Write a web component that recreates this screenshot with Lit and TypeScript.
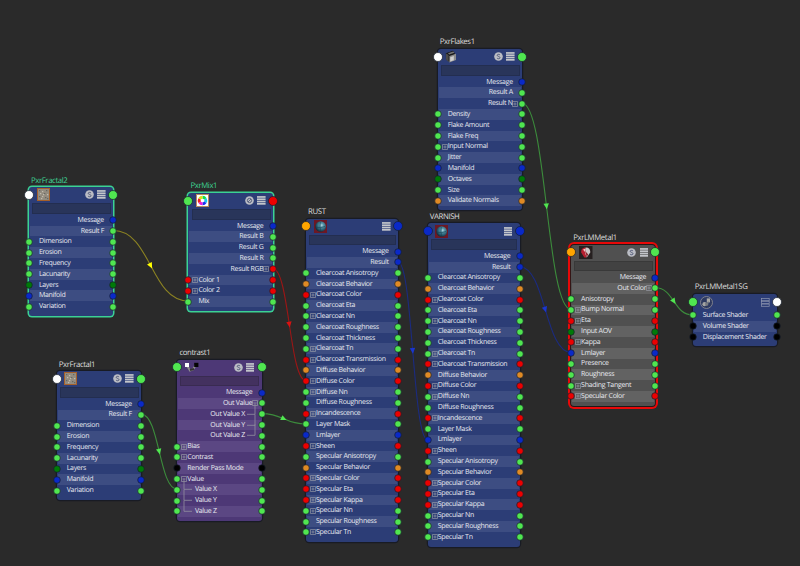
import { LitElement, html, css, svg, nothing } from "lit";
import { customElement, property } from "lit/decorators.js";
import { classMap } from "lit/directives/class-map.js";
import { styleMap } from "lit/directives/style-map.js";

interface Row {
  label: string;
  color: string;
  side: "in" | "out";
  box?: "plus" | "minus";
  sub?: "mid" | "last";
}

interface NodeData {
  title: string;
  x: number;
  y: number;
  w: number;
  h: number;
  theme: "blue" | "purple" | "grey";
  mark?: "green" | "red";
  icon: string;
  solo?: "S" | "O";
  inPort: string;
  outPort: string;
  compact?: boolean;
  rows: Row[];
}

const PORT: Record<string, string> = {
  g: "#50e650",
  d: "#007a08",
  b: "#0a29c8",
  r: "#ec0000",
  o: "#e08a24",
  k: "#000000",
  w: "#ffffff",
  y: "#ffa500",
};

/* Row notation: ">" output, "<" input; then the port colour; "+" or "-" expander; "." or "_" child. */
const parse = (src: string): Row[] =>
  src.split("|").map((s) => {
    const f = s[2];
    return {
      side: s[0] === ">" ? "out" : "in",
      color: PORT[s[1]],
      box: f === "+" ? "plus" : f === "-" ? "minus" : undefined,
      sub: f === "." ? "mid" : f === "_" ? "last" : undefined,
      label: s.slice(3),
    };
  });

const fractalRows = parse(
  ">b Message|>g Result F|<g Dimension|<g Erosion|<g Frequency|<g Lacunarity|<d Layers|<b Manifold|<g Variation"
);
const layerRows = parse(
  ">b Message|>b Result|<g Clearcoat Anisotropy|<o Clearcoat Behavior|<r+Clearcoat Color|<g Clearcoat Eta|<g+Clearcoat Nn|<g Clearcoat Roughness|<g Clearcoat Thickness|<g+Clearcoat Tn|<r+Clearcoat Transmission|<o Diffuse Behavior|<r+Diffuse Color|<g+Diffuse Nn|<g Diffuse Roughness|<r+Incandescence|<g Layer Mask|<b Lmlayer|<r+Sheen|<g Specular Anisotropy|<o Specular Behavior|<r+Specular Color|<r+Specular Eta|<r+Specular Kappa|<g+Specular Nn|<g Specular Roughness|<g+Specular Tn"
);

const nodes: NodeData[] = [
  { title: "PxrFlakes1", x: 437.6, y: 49, w: 84.4, h: 160.7, theme: "blue", icon: "flakes", solo: "S", inPort: "w", outPort: "g",
    rows: parse(">b Message|>g Result A|>g+Result N|<g Density|<g Flake Amount|<g Flake Freq|<g+Input Normal|<g Jitter|<b Manifold|<d Octaves|<g Size|<o Validate Normals") },
  { title: "PxrFractal2", x: 28.8, y: 187.2, w: 84.4, h: 129.2, theme: "blue", mark: "green", icon: "fractal", solo: "S", inPort: "w", outPort: "g", rows: fractalRows },
  { title: "PxrFractal1", x: 56.6, y: 371.1, w: 84.4, h: 129.2, theme: "blue", icon: "fractal", solo: "S", inPort: "w", outPort: "g", rows: fractalRows },
  { title: "PxrMix1", x: 188.3, y: 193, w: 84.4, h: 118, theme: "blue", mark: "green", icon: "mix", solo: "O", inPort: "g", outPort: "r",
    rows: parse(">b Message|>g Result B|>g Result G|>g Result R|>r+Result RGB|<r+Color 1|<r+Color 2|<g Mix") },
  { title: "contrast1", x: 177.2, y: 359.6, w: 84.4, h: 161, theme: "purple", icon: "contrast", solo: "S", inPort: "g", outPort: "g",
    rows: parse(">b Message|>g-Out Value|>g.Out Value X|>g.Out Value Y|>g_Out Value Z|<g+Bias|<g+Contrast|<k Render Pass Mode|<g-Value|<g.Value X|<g.Value Y|<g_Value Z") },
  { title: "RUST", x: 305.9, y: 218.6, w: 92, h: 323.5, theme: "blue", icon: "sphere", inPort: "y", outPort: "b", rows: layerRows },
  { title: "VARNISH", x: 427.6, y: 223.3, w: 92, h: 323.5, theme: "blue", icon: "sphere", inPort: "b", outPort: "b", rows: layerRows },
  { title: "PxrLMMetal1", x: 571, y: 244.5, w: 84.4, h: 161, theme: "grey", mark: "red", icon: "metal", solo: "S", inPort: "y", outPort: "g",
    rows: parse(">b Message|>g+Out Color|<g Anisotropy|<g+Bump Normal|<r+Eta|<d Input AOV|<r+Kappa|<b Lmlayer|<g Presence|<g Roughness|<g+Shading Tangent|<r+Specular Color") },
  { title: "PxrLMMetal1SG", x: 692.6, y: 294, w: 84.2, h: 52.2, theme: "blue", icon: "group", inPort: "g", outPort: "w", compact: true,
    rows: parse("<g Surface Shader|<k Volume Shader|<k Displacement Shader") },
];

interface Link { from: [number, number]; to: [number, number]; line: string; tip: string }
const links: Link[] = [
  { from: [113.5, 230.5], to: [188, 301], line: "#8c8322", tip: "#ffff00" },
  { from: [141.5, 414.4], to: [177, 489], line: "#3c8c3c", tip: "#50e650" },
  { from: [272.7, 268.5], to: [306, 380.5], line: "#9c1616", tip: "#d81212" },
  { from: [261.7, 413.6], to: [306, 424], line: "#3c8c3c", tip: "#50e650" },
  { from: [398, 262], to: [427.4, 439.4], line: "#1b2b80", tip: "#1a36d0" },
  { from: [519.5, 266.7], to: [571, 352.4], line: "#1b2b80", tip: "#1a36d0" },
  { from: [522, 103.2], to: [571, 309.4], line: "#3c8c3c", tip: "#50e650" },
  { from: [655.5, 287.8], to: [692.4, 315], line: "#3c8c3c", tip: "#50e650" },
];

const grain = [
  [2, 2], [5, 3], [9, 2], [3, 5], [7, 5], [10, 6], [2, 8], [5, 8], [8, 9], [4, 10], [10, 10], [6, 6],
];

const icons: Record<string, unknown> = {
  fractal: svg`<rect x=".5" y=".5" width="12" height="12" fill="#938c80" stroke="#a5602a"/>
    ${grain.map(([x, y], i) => svg`<rect x=${x} y=${y} width="1.3" height="1.2" fill=${i % 2 ? "#c1bcae" : "#666863"}/>`)}`,
  mix: svg`<rect x=".5" y=".5" width="12" height="12" fill="#fff" stroke="#b98a5e"/>
    <g fill="none" stroke-width="2.9">
      <path d="M6.5 3.2A3.3 3.3 0 0 1 9.4 4.9" stroke="#14e04a"/><path d="M9.4 4.9A3.3 3.3 0 0 1 9.3 8.2" stroke="#18c8f0"/>
      <path d="M9.3 8.2A3.3 3.3 0 0 1 6.5 9.8" stroke="#1830f0"/><path d="M6.5 9.8A3.3 3.3 0 0 1 3.7 8.2" stroke="#e818d8"/>
      <path d="M3.7 8.2A3.3 3.3 0 0 1 3.6 4.9" stroke="#f02020"/><path d="M3.6 4.9A3.3 3.3 0 0 1 6.5 3.2" stroke="#d8e018"/>
    </g>`,
  contrast: svg`<path d="M2 4.5L5 9.5L8 8.5L10.5 4.5" fill="none" stroke="#8c8c8c" stroke-width="2"/>
    <path d="M5 9L9 8" stroke="#333" stroke-width="2"/>
    <rect x="0" y="2" width="4" height="4" fill="#fff"/><rect x="9.2" y="1.8" width="4.2" height="4.2" fill="#050505"/>`,
  sphere: svg`<defs><radialGradient id="ball" cx=".6" cy=".38" r=".62">
      <stop offset="0" stop-color="#b4d6de"/><stop offset=".3" stop-color="#5595a8"/><stop offset=".7" stop-color="#2a6074"/><stop offset="1" stop-color="#12303e"/>
    </radialGradient></defs>
    <rect width="13" height="13" fill="#6c1824"/><circle cx="6.6" cy="6.5" r="5.3" fill="url(#ball)"/>
    <path d="M2.4 7.2Q6.6 8.6 11 6.4M6.4 1.8Q5.4 6 6.6 11" fill="none" stroke="#173c4c" stroke-width=".5"/>`,
  flakes: svg`<path d="M.8 3.2L8 .8L10 3.5L5 12L1 9.5Z" fill="#191919"/><path d="M1 3.4L3.6 5V12L1 9.6Z" fill="#4a4a4a"/>
    <path d="M3 3.2L8.2 1.6L9.4 2.8L4.2 4.4Z" fill="#777"/><path d="M4.4 6L11 3.8V10L4.4 12.4Z" fill="#8d8d8d"/><path d="M5.2 7.2L8.8 6V10.2L5.2 11.6Z" fill="#cfcfcf"/>`,
  metal: svg`<rect width="13.5" height="13" fill="#262020"/><path d="M6.7 1.4C3 1.4 2 4 2.2 6.6L5.4 11.6H7.4Z" fill="#b82030"/>
    <path d="M6.7 1.4C10.2 1.2 11.6 4 11.2 6.6L7.8 11.4L6.4 8Z" fill="#cfc8c8"/><path d="M4 3.6L6.8 2.6L6 6Z" fill="#ecc"/><path d="M6.6 5.6L9.2 8.6L7.6 11Z" fill="#8c1c26"/>`,
  group: svg`<circle cx="6.5" cy="6.5" r="6" fill="#2d3960" stroke="#87888f" stroke-width=".9"/>
    <rect x="6.8" y="2.4" width="3.2" height="4" fill="#aaa9a6"/><circle cx="4.5" cy="8.2" r="2.1" fill="#a4a4a2"/><path d="M5 7.2L8.8 5.2L8 9.4L5.5 10Z" fill="#777a80"/>`,
};

@customElement("graph-node")
class GraphNode extends LitElement {
  @property({ attribute: false }) data!: NodeData;

  static styles = css`
    :host { display: block; position: absolute; text-rendering: geometricPrecision; }
    .title {
      position: absolute; left: 2.2px; top: -12.6px; white-space: nowrap;
      font-size: 7.8px; line-height: 12px; letter-spacing: -.4px; color: #dedede;
    }
    .green .title { color: #3fd595; }
    .card {
      box-sizing: border-box; height: 100%; border-radius: 3px; display: flex; flex-direction: column;
      background: var(--base); box-shadow: 0 0 0 1.2px #181b24;
    }
    .blue { --base: #2c3d76; --alt: #3d4d82; --field: #29355a; --edge: #232e50; }
    .purple { --base: #4d3876; --alt: #5b4783; --field: #43315f; --edge: #392b51; }
    .grey { --base: #505050; --alt: #626262; --field: #424242; --edge: #393939; }
    .green .card { box-shadow: 0 0 0 1.5px #3bd294; }
    .red .card { box-shadow: 0 0 0 .9px #221818, 0 0 0 3px #e80808; }
    .frame { height: 100%; }
    .head { height: 15.6px; flex: none; display: flex; align-items: center; }
    .knob { width: 10px; height: 10px; flex: none; display: block; position: relative; }
    .knob.left { margin-left: -5px; }
    .knob.right { margin-right: -5px; margin-left: 2.2px; }
    .thumb { width: 13.5px; height: 13px; margin-left: 2.8px; display: block; overflow: visible; }
    .grow { flex: 1; }
    .solo { width: 9px; height: 9px; margin-right: 3.2px; display: block; }
    .menu { width: 8.6px; height: 9px; display: block; }
    .field {
      height: 10.6px; flex: none; margin: .5px 2.2px 1px 3.3px; background: var(--field);
      box-sizing: border-box; border: 1px solid var(--edge);
    }
    .compact .field { display: none; }
    .compact .head { height: 16px; }
    .row {
      height: 10.81px; flex: none; display: flex; align-items: center; position: relative;
      font-size: 7px; line-height: 10px; letter-spacing: -.29px; color: #e8eaf0; white-space: nowrap;
    }
    .row.alt { background: linear-gradient(var(--alt), var(--alt)) 1px 0 / calc(100% - 2px) 100% no-repeat; }
    .label { padding-top: 1px; }
    .pin { width: 8px; height: 8px; flex: none; display: block; position: relative; }
    .pin.left { margin-left: -4px; }
    .pin.right { margin-right: -4px; }
    .slot { width: 6.1px; flex: none; display: flex; justify-content: center; position: relative; }
    .out .slot { width: 5.2px; }
    .out .gap { flex: 1; }
    .tick { width: 6px; height: 6px; flex: none; display: block; }
    .kid { margin-left: 7.6px; }
    .out .kid { margin-left: 0; margin-right: 7.4px; }
    .rail { position: absolute; top: -4px; width: 8px; height: 11px; overflow: visible; }
    .in .rail { left: 6.6px; }
    .out .rail { right: 6.2px; }
  `;

  private port(kind: "knob" | "pin", side: "left" | "right", color: string) {
    const size = kind === "knob" ? 10 : 8;
    return html`<svg class="${kind} ${side}" viewBox="0 0 ${size} ${size}">
      <circle cx=${size / 2} cy=${size / 2} r=${kind === "knob" ? 4.5 : 3.3} fill=${color} stroke="#17202c" stroke-width=".7"/>
    </svg>`;
  }

  private row(r: Row, i: number) {
    const out = r.side === "out";
    const slot = html`<span class="slot">${r.box
      ? svg`<svg class="tick" viewBox="0 0 6 6"><path d="M.5 .5H5.5V5.5H.5ZM1.4 3H4.6${r.box === "plus" ? "M3 1.4V4.6" : ""}" fill="none" stroke="#9b9ea9" stroke-width=".65"/></svg>`
      : nothing}</span>`;
    const rail = r.sub
      ? svg`<svg class="rail" viewBox="0 0 8 11"><path d=${out ? "M8 -1.5V9.3M0 9.3H8" : "M0 -1.5V9.3M0 9.3H8"} fill="none" stroke="#93909f" stroke-width=".8"/></svg>`
      : nothing;
    const text = html`<span class=${classMap({ label: true, kid: !!r.sub })}>${r.label}</span>`;
    return html`<div class=${classMap({ row: true, alt: i % 2 === 1, out, in: !out })}>
      ${out ? nothing : this.port("pin", "left", r.color)}${out
        ? html`<span class="gap"></span>${text}${slot}`
        : html`${slot}${text}<span class="grow"></span>`}
      ${rail}${this.port("pin", "right", r.color)}
    </div>`;
  }

  render() {
    const d = this.data;
    return html`<div class=${["frame", d.theme, d.mark ?? "", d.compact ? "compact" : ""].join(" ")}>
      <div class="title">${d.title}</div>
      <div class="card">
        <div class="head">
          ${this.port("knob", "left", PORT[d.inPort])}
          <svg class="thumb" viewBox="0 0 13.5 13">${icons[d.icon]}</svg>
          <span class="grow"></span>
          ${d.solo
            ? html`<svg class="solo" viewBox="0 0 9 9"><circle cx="4.5" cy="4.5" r="4.3" fill="#babcc4"/>${
                d.solo === "S"
                  ? svg`<path d="M6 3C5.2 2 3.2 2.2 3.2 3.3C3.2 4.7 6 4.2 6 5.7C6 7 3.8 7.1 3 6" fill="none" stroke="#4c5575" stroke-width=".9"/>`
                  : svg`<circle cx="4.5" cy="4.5" r="2.1" fill="none" stroke="#4c5575" stroke-width=".9"/><path d="M3 6L6 3" stroke="#4c5575" stroke-width=".8"/>`
              }</svg>`
            : nothing}
          <svg class="menu" viewBox="0 0 8.6 9">${[0, 1, 2, 3].map((n) =>
            d.compact
              ? n < 3 ? svg`<rect x=".4" y=${0.5 + n * 2.8} width="7.8" height="2.2" fill="none" stroke="#8e96b0" stroke-width=".7"/>` : nothing
              : svg`<rect y=${0.1 + n * 2.3} width="8.6" height="1.7" fill="#c3c5ca"/>`
          )}</svg>
          ${this.port("knob", "right", PORT[d.outPort])}
        </div>
        <div class="field"></div>
        ${d.rows.map((r, i) => this.row(r, i))}
      </div>
    </div>`;
  }
}

@customElement("app-root")
class AppRoot extends LitElement {
  static styles = css`
    :host {
      display: block; position: relative; width: 800px; height: 566px; overflow: hidden; background: #2a2a2a;
      font-family: "Open Sans", "Noto Sans", sans-serif;
    }
    .links { position: absolute; inset: 0; width: 800px; height: 566px; pointer-events: none; }
  `;

  private link({ from: [x1, y1], to: [x2, y2], line, tip }: Link) {
    const mx = (x1 + x2) / 2;
    const my = (y1 + y2) / 2;
    const angle = (Math.atan2(y2 - y1, (x2 - x1) / 2) * 180) / Math.PI;
    return svg`<path d="M${x1} ${y1}C${mx} ${y1} ${mx} ${y2} ${x2} ${y2}" fill="none" stroke=${line} stroke-width="1.1"/>
      <path d="M-2.8 -2.7L3 0L-2.8 2.7Z" fill=${tip} transform="translate(${mx} ${my}) rotate(${angle})"/>`;
  }

  render() {
    return html`
      <svg class="links" viewBox="0 0 800 566">${links.map((l) => this.link(l))}</svg>
      ${nodes.map(
        (n) => html`<graph-node .data=${n}
          style=${styleMap({ left: `${n.x}px`, top: `${n.y}px`, width: `${n.w}px`, height: `${n.h}px` })}></graph-node>`
      )}
    `;
  }
}
